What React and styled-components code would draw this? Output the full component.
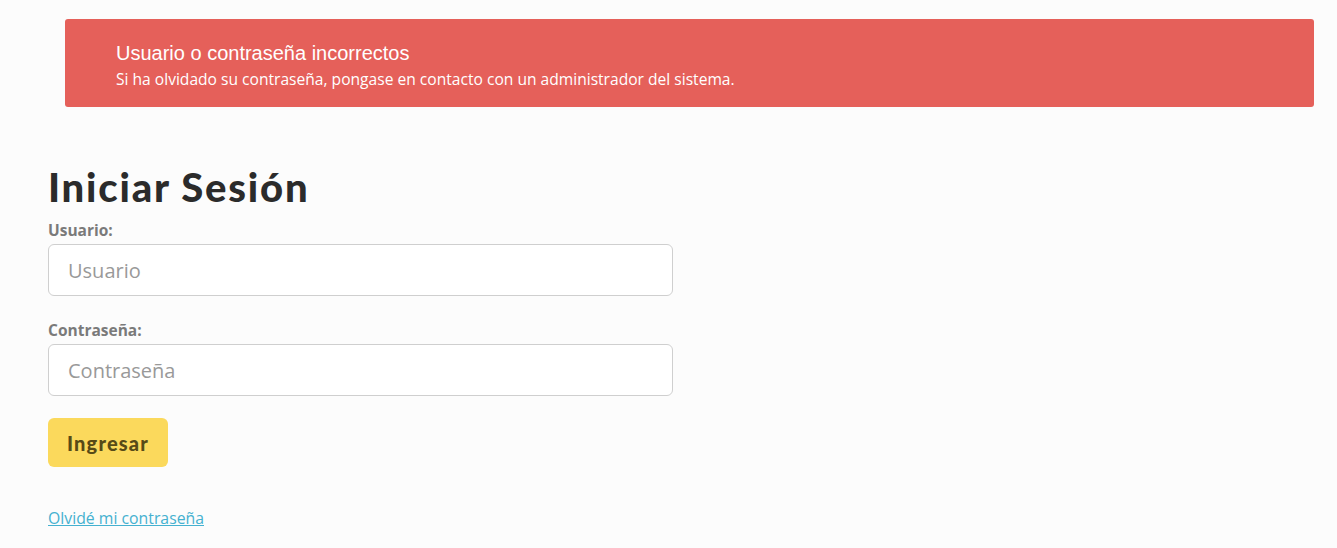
import React from "react";
import styled, { createGlobalStyle } from "styled-components";

const Global = createGlobalStyle`
  html, body { margin: 0; padding: 0; background: #fcfcfc; }
  body { font-family: "Open Sans", sans-serif; }
`;

const Page = styled.div`
  display: flex;
  flex-direction: column;
  padding: 19px 23px 0 48px;
`;

const Alert = styled.div`
  margin-left: 17px;
  height: 88px;
  box-sizing: border-box;
  background: #e5605a;
  border-radius: 3px;
  padding: 20px 51px 0;
  color: #fff;
`;

const AlertTitle = styled.div`
  font-family: "Liberation Sans", Arial, sans-serif;
  font-size: 20px;
  line-height: 28px;
`;

const AlertText = styled.div`
  font-family: "Open Sans", sans-serif;
  font-size: 15.6px;
  line-height: 24px;
`;

const Title = styled.h1`
  margin: 55px 0 0;
  font-family: "Lato", sans-serif;
  font-weight: 900;
  font-size: 40px;
  line-height: 50px;
  letter-spacing: 1.8px;
  color: #2b2b2b;
`;

const Field = styled.div`
  display: flex;
  flex-direction: column;
  margin-top: ${(p) => p.$top}px;
`;

const Label = styled.label`
  font-family: "Open Sans", sans-serif;
  font-weight: 700;
  font-size: 15.5px;
  line-height: 22px;
  color: #7a7a7a;
  margin-bottom: 3px;
`;

const Input = styled.input`
  width: 625px;
  height: 52px;
  box-sizing: border-box;
  border: 1px solid #cfcfcf;
  border-radius: 6px;
  background: #fff;
  padding: 0 19px;
  font-family: "Open Sans", sans-serif;
  font-size: 20px;
  color: #555;
  outline: none;
  &::placeholder { color: #999; }
`;

const Button = styled.button`
  margin-top: 22px;
  width: 120px;
  height: 49px;
  padding: 0;
  border: none;
  border-radius: 6px;
  background: #fbd95c;
  color: #574a17;
  font-family: "Lato", sans-serif;
  font-weight: 900;
  font-size: 20px;
  letter-spacing: 1.2px;
  cursor: pointer;
  align-self: flex-start;
`;

const Link = styled.a`
  margin-top: 40px;
  font-family: "Open Sans", sans-serif;
  font-size: 15.8px;
  line-height: 22px;
  color: #45b1d0;
  text-decoration: underline;
  align-self: flex-start;
`;

export default function App() {
  return (
    <>
      <Global />
      <Page>
        <Alert>
          <AlertTitle>Usuario o contraseña incorrectos</AlertTitle>
          <AlertText>
            Si ha olvidado su contraseña, pongase en contacto con un administrador del sistema.
          </AlertText>
        </Alert>
        <Title>Iniciar Sesión</Title>
        <Field $top={7}>
          <Label>Usuario:</Label>
          <Input placeholder="Usuario" />
        </Field>
        <Field $top={23}>
          <Label>Contraseña:</Label>
          <Input type="password" placeholder="Contraseña" />
        </Field>
        <Button>Ingresar</Button>
        <Link href="#">Olvidé mi contraseña</Link>
      </Page>
    </>
  );
}
